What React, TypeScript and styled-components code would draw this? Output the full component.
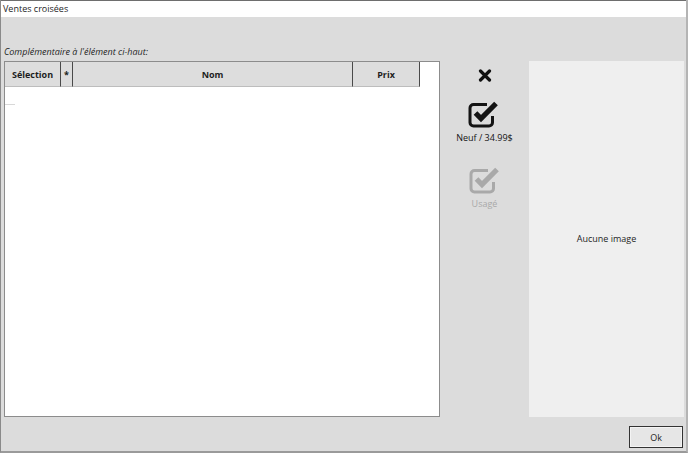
import * as React from 'react';
import styled, { createGlobalStyle } from 'styled-components';

const GlobalStyle = createGlobalStyle`
  html, body {
    margin: 0;
    padding: 0;
    background: #dcdcdc;
  }
  * {
    box-sizing: border-box;
  }
`;

const Window = styled.div`
  width: 688px;
  height: 453px;
  display: flex;
  flex-direction: column;
  background: #dcdcdc;
  font-family: 'Open Sans', 'Noto Sans', sans-serif;
  font-size: 9px;
  color: #1e1e1e;
  border-left: 1px solid #8a8a8a;
  border-right: 2px solid #b4b4b4;
  border-bottom: 2px solid #9a9a9a;
  overflow: hidden;
`;

const TitleBar = styled.div`
  height: 17px;
  background: #ffffff;
  border-top: 1px solid #6e6e6e;
  padding: 1px 2px;
  line-height: 13px;
`;

const Body = styled.div`
  flex: 1;
  display: flex;
  flex-direction: column;
  padding: 0 2px 0 3px;
`;

const Label = styled.div`
  margin-top: 28px;
  height: 16px;
  line-height: 14px;
  font-style: italic;
`;

const MainRow = styled.div`
  display: flex;
  height: 356px;
`;

const TableBox = styled.div`
  width: 436px;
  background: #ffffff;
  border: 1px solid #8c8c8c;
`;

const HeaderRow = styled.div`
  display: flex;
  height: 25px;
`;

const HeaderCell = styled.div<{ $w: number }>`
  width: ${(p) => p.$w}px;
  background: #dddddd;
  border-right: 1px solid #4a4a4a;
  border-bottom: 1px solid #bdbdbd;
  display: flex;
  align-items: center;
  justify-content: center;
  font-weight: bold;
  padding-top: 1px;
`;

const RowMarker = styled.div`
  width: 10px;
  height: 1px;
  margin-top: 17px;
  background: #d8d8d8;
`;

const Actions = styled.div`
  width: 89px;
  display: flex;
  flex-direction: column;
  align-items: center;
  padding-top: 8px;
`;

const CloseButton = styled.div`
  height: 13px;
  margin-bottom: 18px;
  display: flex;
`;

const IconButton = styled.div<{ $disabled?: boolean }>`
  display: flex;
  flex-direction: column;
  align-items: center;
  gap: 4px;
  color: ${(p) => (p.$disabled ? '#a9a9a9' : '#141414')};
  margin-bottom: 22px;
  line-height: 12px;
`;

const ImagePanel = styled.div`
  width: 155px;
  background: #efefef;
  display: flex;
  align-items: center;
  justify-content: center;
  padding-bottom: 2px;
`;

const Footer = styled.div`
  display: flex;
  justify-content: flex-end;
  padding: 9px 1px 0 0;
`;

const OkButton = styled.button`
  width: 54px;
  height: 22px;
  background: #e6e6e6;
  border: 1px solid #333333;
  box-shadow: inset 0 0 0 1px #f4f4f4;
  font-family: inherit;
  font-size: 9px;
  color: #1e1e1e;
  padding: 0;
`;

const CloseIcon = () => (
  <svg width="14" height="13" viewBox="0 0 14 13">
    <path d="M2.5 2 L11.5 11 M11.5 2 L2.5 11" stroke="#111" strokeWidth="3.2" strokeLinecap="round" />
  </svg>
);

const CheckIcon = ({ color }: { color: string }) => (
  <svg width="32" height="28" viewBox="0 0 32 28">
    <path
      d="M19 4.5 H5.5 a3.5 3.5 0 0 0 -3.5 3.5 V22.5 a3.5 3.5 0 0 0 3.5 3.5 H21 a3.5 3.5 0 0 0 3.5 -3.5 V16"
      fill="none"
      stroke={color}
      strokeWidth="3"
    />
    <path
      d="M7.5 13 L13 18.5 L28 3.5"
      fill="none"
      stroke={color}
      strokeWidth="5.2"
      strokeLinejoin="miter"
    />
  </svg>
);

export default function App() {
  return (
    <Window>
      <GlobalStyle />
      <TitleBar>Ventes croisées</TitleBar>
      <Body>
        <Label>Complémentaire à l'élément ci-haut:</Label>
        <MainRow>
          <TableBox>
            <HeaderRow>
              <HeaderCell $w={56}>Sélection</HeaderCell>
              <HeaderCell $w={12}>*</HeaderCell>
              <HeaderCell $w={280}>Nom</HeaderCell>
              <HeaderCell $w={67}>Prix</HeaderCell>
            </HeaderRow>
            <RowMarker />
          </TableBox>
          <Actions>
            <CloseButton>
              <CloseIcon />
            </CloseButton>
            <IconButton>
              <CheckIcon color="#141414" />
              <span>Neuf / 34.99$</span>
            </IconButton>
            <IconButton $disabled>
              <CheckIcon color="#a9a9a9" />
              <span>Usagé</span>
            </IconButton>
          </Actions>
          <ImagePanel>Aucune image</ImagePanel>
        </MainRow>
        <Footer>
          <OkButton>Ok</OkButton>
        </Footer>
      </Body>
    </Window>
  );
}
